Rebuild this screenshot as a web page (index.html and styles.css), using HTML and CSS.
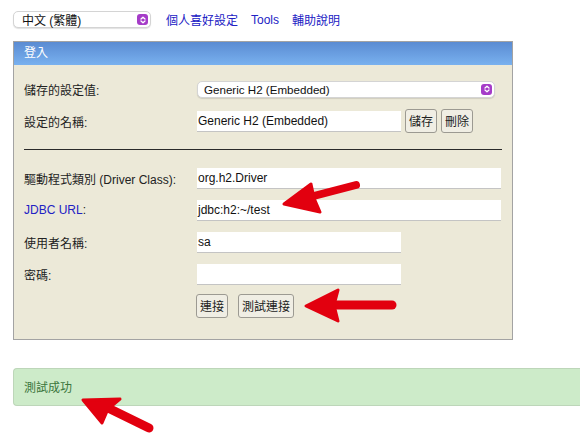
FILE: index.html
```html
<!DOCTYPE html>
<html lang="zh-Hant">
<head>
<meta charset="utf-8">
<title>H2 Console</title>
<link rel="stylesheet" href="styles.css">
</head>
<body>
<div class="toolbar">
  <div class="mselect lang">
    <span class="mselect-text">中文 (繁體)</span>
    <span class="stepper"><svg viewBox="0 0 10 10" width="10" height="10"><path d="M3 4 L5 2.2 L7 4 M3 6 L5 7.8 L7 6" fill="none" stroke="#fff" stroke-width="1.3" stroke-linecap="round" stroke-linejoin="round"/></svg></span>
  </div>
  <a class="toplink" href="#">個人喜好設定</a>
  <a class="toplink" href="#">Tools</a>
  <a class="toplink" href="#">輔助說明</a>
</div>

<div class="login">
  <div class="login-head">登入</div>
  <div class="login-body">
    <div class="row">
      <span class="label">儲存的設定值:</span>
      <div class="mselect setting">
        <span class="mselect-text">Generic H2 (Embedded)</span>
        <span class="stepper"><svg viewBox="0 0 10 10" width="10" height="10"><path d="M3 4 L5 2.2 L7 4 M3 6 L5 7.8 L7 6" fill="none" stroke="#fff" stroke-width="1.3" stroke-linecap="round" stroke-linejoin="round"/></svg></span>
      </div>
    </div>
    <div class="row">
      <span class="label">設定的名稱:</span>
      <div class="field short">Generic H2 (Embedded)</div>
      <button class="btn first">儲存</button>
      <button class="btn near">刪除</button>
    </div>
    <div class="rule"></div>
    <div class="row">
      <span class="label">驅動程式類別 (Driver Class):</span>
      <div class="field long">org.h2.Driver</div>
    </div>
    <div class="row">
      <span class="label"><span class="link">JDBC URL</span>:</span>
      <div class="field long">jdbc:h2:~/test</div>
    </div>
    <div class="row">
      <span class="label">使用者名稱:</span>
      <div class="field short">sa</div>
    </div>
    <div class="row">
      <span class="label">密碼:</span>
      <div class="field short"></div>
    </div>
    <div class="row">
      <span class="label"></span>
      <button class="btn connect">連接</button>
      <button class="btn test">測試連接</button>
    </div>
  </div>
</div>

<div class="alert">測試成功</div>

<svg class="arrows" width="580" height="448" viewBox="0 0 580 448">
  <g fill="#e2000f" stroke="#e2000f" stroke-linecap="round" stroke-linejoin="round">
    <line x1="356" y1="185" x2="306" y2="198" stroke-width="8"/>
    <path d="M284 204 L311 184 L314 198 L320 212 Z" stroke-width="3"/>
    <line x1="392" y1="305" x2="330" y2="305" stroke-width="9"/>
    <path d="M306 306 L338 290 L334 305 L338 321 Z" stroke-width="3"/>
    <line x1="149" y1="428" x2="104" y2="406" stroke-width="9"/>
    <path d="M83 400 L120 399 L108 409 L102 423 Z" stroke-width="3"/>
  </g>
</svg>
</body>
</html>
```

FILE: styles.css
```css
html { overflow: hidden; }
body {
  margin: 0;
  position: relative;
  width: 580px;
  height: 448px;
  background: #fff;
  font-family: "Liberation Sans", "Noto Sans CJK TC", sans-serif;
  font-size: 12px;
  color: #222;
}
.toolbar {
  display: flex;
  align-items: center;
  height: 17px;
  padding: 11px 0 0 13px;
}
.mselect {
  display: flex;
  align-items: center;
  box-sizing: border-box;
  height: 17px;
  background: #fff;
  border: 1px solid #d4d4d4;
  border-radius: 5px;
  box-shadow: 0 1px 1px rgba(0,0,0,0.12);
  font-size: 12px;
  color: #111;
}
.mselect-text { flex: 1; white-space: nowrap; }
.lang { width: 138px; padding-left: 8px; margin-right: 15px; }
.setting { width: 298px; padding-left: 6px; font-size: 11.6px; }
.stepper {
  display: flex;
  width: 11px;
  height: 11px;
  margin-right: 2px;
  border-radius: 3px;
  background: #a53cc8;
  align-items: center;
  justify-content: center;
}
.stepper svg { display: block; }
.toplink {
  color: #2121c4;
  text-decoration: none;
  margin-right: 13px;
  font-size: 12px;
}
.login {
  box-sizing: border-box;
  width: 500px;
  margin: 13px 0 0 13px;
  border: 1px solid #a3a3a3;
  background: #ece9d8;
}
.login-head {
  height: 23px;
  line-height: 23px;
  padding-left: 10px;
  color: #fff;
  font-size: 12px;
  background: linear-gradient(#5a8bd2, #79b1ef);
}
.login-body {
  padding: 8px 10px 17px 10px;
}
.row {
  display: flex;
  align-items: center;
  height: 32px;
}
.label {
  flex: 0 0 173px;
  white-space: nowrap;
}
.link { color: #2121c4; }
.field {
  box-sizing: border-box;
  height: 21px;
  line-height: 20px;
  padding-left: 1px;
  background: #fff;
  border-bottom: 1px solid #c4c4c4;
  font-size: 12px;
  color: #111;
  white-space: nowrap;
}
.field.long { width: 304px; }
.field.short { width: 204px; }
.btn {
  box-sizing: border-box;
  height: 24px;
  padding: 0 3px;
  margin: 0;
  border: 1px solid #9c9a92;
  border-radius: 3px;
  background: #f0eee4;
  font-family: "Noto Sans CJK TC", sans-serif;
  font-size: 12px;
  color: #222;
  line-height: 22px;
}
.btn.first { margin-left: 4px; width: 32px; }
.btn.near { margin-left: 4px; width: 32px; }
.btn.connect { margin-left: -1px; width: 32px; }
.btn.test { margin-left: 10px; width: 56px; }
.rule {
  height: 1px;
  background: #2a2a2a;
  margin: 12px 0;
}
.alert {
  box-sizing: border-box;
  height: 38px;
  margin: 28px 0 0 13px;
  padding-left: 10px;
  line-height: 36px;
  border: 1px solid #bdd6b9;
  border-right: none;
  border-radius: 4px 0 0 4px;
  background: #cdebc9;
  color: #3c763d;
  font-size: 12px;
  font-family: "Noto Sans CJK TC", sans-serif;
}
.arrows {
  position: absolute;
  left: 0;
  top: 0;
  pointer-events: none;
}
```
